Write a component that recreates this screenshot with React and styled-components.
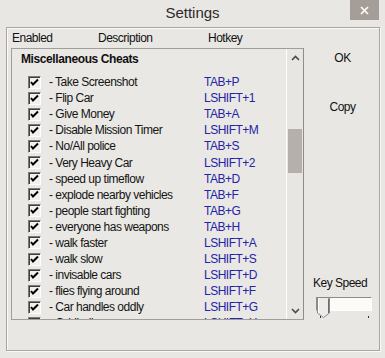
import React from "react";
import styled, { createGlobalStyle } from "styled-components";

const FONT = `"Liberation Sans", Arial, sans-serif`;

const GlobalStyle = createGlobalStyle`
  html, body {
    margin: 0;
    padding: 0;
  }
  body {
    background: #e9e7e4;
    overflow: hidden;
  }
`;

const cheats = [
  ["- Take Screenshot", "TAB+P"],
  ["- Flip Car", "LSHIFT+1"],
  ["- Give Money", "TAB+A"],
  ["- Disable Mission Timer", "LSHIFT+M"],
  ["- No/All police", "TAB+S"],
  ["- Very Heavy Car", "LSHIFT+2"],
  ["- speed up timeflow", "TAB+D"],
  ["- explode nearby vehicles", "TAB+F"],
  ["- people start fighting", "TAB+G"],
  ["- everyone has weapons", "TAB+H"],
  ["- walk faster", "LSHIFT+A"],
  ["- walk slow", "LSHIFT+S"],
  ["- invisable cars", "LSHIFT+D"],
  ["- flies flying around", "LSHIFT+F"],
  ["- Car handles oddly", "LSHIFT+G"],
  ["- Oddball cars", "LSHIFT+H"],
];

const Window = styled.div`
  width: 385px;
  height: 358px;
  display: flex;
  flex-direction: column;
  background: #e9e7e4;
  font-family: ${FONT};
  font-size: 12px;
  letter-spacing: -0.5px;
  color: #111;
`;

const TitleBar = styled.div`
  display: flex;
  height: 27px;
  align-items: flex-start;
`;

const Title = styled.div`
  flex: 1;
  padding-left: 35px;
  text-align: center;
  font-size: 15px;
  letter-spacing: 0;
  line-height: 26px;
  color: #2b2b2b;
`;

const CloseButton = styled.div`
  width: 29px;
  height: 20px;
  margin-right: 6px;
  background: #a59d98;
  display: flex;
  align-items: center;
  justify-content: center;
`;

const Frame = styled.div`
  flex: 1;
  margin: 0 5px 7px 6px;
  border: 1px solid #aaa7a3;
  box-shadow: inset 1px 1px #fbfaf9, 1px 1px #fbfaf9;
  padding-left: 4px;
  display: flex;
  flex-direction: column;
`;

const Headers = styled.div`
  display: grid;
  grid-template-columns: 86px 110px 1fr;
  height: 20px;
  line-height: 20px;
  padding-left: 1px;
  color: #111;
`;

const Body = styled.div`
  display: flex;
`;

const ListBox = styled.div`
  width: 293px;
  height: 272px;
  box-sizing: border-box;
  border: 1px solid #a19e9a;
  border-right-color: #8f8c88;
  display: flex;
  background: #eae8e5;
`;

const ListContent = styled.div`
  flex: 1;
  overflow: hidden;
  padding-top: 2px;
`;

const Heading = styled.div`
  height: 16px;
  line-height: 16px;
  padding-left: 9px;
  margin-bottom: 7px;
  font-weight: bold;
  letter-spacing: -0.4px;
  color: #111;
`;

const Row = styled.div`
  display: grid;
  grid-template-columns: 13px 147px 1fr;
  column-gap: 8px;
  align-items: center;
  height: 16.1px;
  line-height: 16px;
  padding-left: 16px;
  white-space: nowrap;
`;

const Box = styled.div`
  width: 13px;
  height: 13px;
  box-sizing: border-box;
  border: 1px solid;
  border-color: #7d7b79 #fdfdfd #fdfdfd #7d7b79;
  box-shadow: inset 1px 1px #3f3e3d;
  background: #f1f0ee;
  display: flex;
  align-items: center;
  justify-content: center;
`;

const Label = styled.span`
  color: #141414;
`;

const Hotkey = styled.span`
  color: #2424a6;
`;

const Scrollbar = styled.div`
  width: 16px;
  border-left: 1px solid #fdfdfc;
  display: flex;
  flex-direction: column;
  background: #e8e6e3;
`;

const ScrollArrow = styled.div`
  height: ${(p) => p.$h}px;
  display: flex;
  align-items: center;
  justify-content: center;
`;

const Track = styled.div`
  flex: 1;
`;

const Thumb = styled.div`
  margin: ${(p) => p.$top}px 1px 0;
  height: ${(p) => p.$size}px;
  background: #b6b0ac;
`;

const SidePanel = styled.div`
  flex: 1;
  display: flex;
  flex-direction: column;
  align-items: center;
  padding-left: 2px;
`;

const PushButton = styled.div`
  height: 20px;
  line-height: 20px;
  margin-top: ${(p) => p.$gap || 0}px;
  color: #111;
`;

const SpeedGroup = styled.div`
  margin-top: auto;
  align-self: stretch;
  padding-left: 7px;
`;

const SpeedLabel = styled.div`
  line-height: 14px;
  height: 14px;
`;

const Slider = styled.div`
  position: relative;
  margin: 7px 0 0 3px;
  width: 56px;
  height: 23px;
`;

const SliderTrack = styled.div`
  margin-top: 2px;
  height: 14px;
  box-sizing: border-box;
  border: 1px solid;
  border-color: #8e8c8a #fefefe #fefefe #8e8c8a;
  background: #fbfbfa;
`;

const SliderThumb = styled.svg`
  position: absolute;
  left: 1px;
  top: 0;
`;

const Ticks = styled.div`
  display: flex;
  justify-content: space-between;
  padding: 0 3px 0 4px;
  margin-top: 5px;
`;

const Tick = styled.div`
  width: 1px;
  height: 2px;
  background: #333;
`;

const Check = () => (
  <svg width="9" height="9" viewBox="0 0 9 9">
    <path d="M1 4 L3 6.5 L8 1.5" fill="none" stroke="#000" strokeWidth="2" />
  </svg>
);

const Chevron = ({ up }) => (
  <svg width="9" height="6" viewBox="0 0 9 6">
    <path
      d={up ? "M1 5 L4.5 1.5 L8 5" : "M1 1 L4.5 4.5 L8 1"}
      fill="none"
      stroke="#4a4a4a"
      strokeWidth="1.6"
    />
  </svg>
);

export default function App() {
  return (
    <Window>
      <GlobalStyle />
      <TitleBar>
        <Title>Settings</Title>
        <CloseButton>
          <svg width="9" height="9" viewBox="0 0 9 9">
            <path d="M1 1 L8 8 M8 1 L1 8" stroke="#fff" strokeWidth="1.6" />
          </svg>
        </CloseButton>
      </TitleBar>
      <Frame>
        <Headers>
          <span>Enabled</span>
          <span>Description</span>
          <span>Hotkey</span>
        </Headers>
        <Body>
          <ListBox>
            <ListContent>
              <Heading>Miscellaneous Cheats</Heading>
              {cheats.map(([label, key]) => (
                <Row key={label}>
                  <Box>
                    <Check />
                  </Box>
                  <Label>{label}</Label>
                  <Hotkey>{key}</Hotkey>
                </Row>
              ))}
            </ListContent>
            <Scrollbar>
              <ScrollArrow $h={18}>
                <Chevron up />
              </ScrollArrow>
              <Track>
                <Thumb $top={62} $size={44} />
              </Track>
              <ScrollArrow $h={17}>
                <Chevron />
              </ScrollArrow>
            </Scrollbar>
          </ListBox>
          <SidePanel>
            <PushButton>OK</PushButton>
            <PushButton $gap={29}>Copy</PushButton>
            <SpeedGroup>
              <SpeedLabel>Key Speed</SpeedLabel>
              <Slider>
                <SliderTrack />
                <SliderThumb width="13" height="21" viewBox="0 0 13 21">
                  <path
                    d="M0.5 0.5 H12.5 V16 L6.5 20.5 L0.5 16 Z"
                    fill="#eeecea"
                    stroke="#8a8886"
                  />
                  <path d="M1.5 1.5 V15.5" stroke="#fff" />
                  <path d="M11.5 1.5 V16" stroke="#6e6c6a" />
                </SliderThumb>
                <Ticks>
                  <Tick />
                  <Tick />
                </Ticks>
              </Slider>
            </SpeedGroup>
          </SidePanel>
        </Body>
      </Frame>
    </Window>
  );
}
